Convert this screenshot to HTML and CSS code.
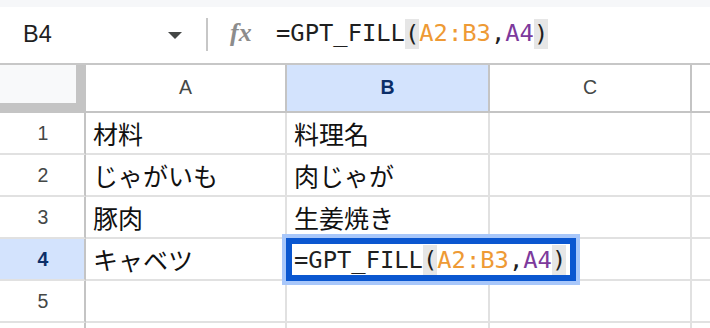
FILE: index.html
```html
<!DOCTYPE html>
<html lang="ja">
<head>
<meta charset="utf-8">
<link rel="stylesheet" href="styles.css">
</head>
<body>
<div class="top-strip"></div>
<div class="fbar">
  <div class="namebox"><span class="name">B4</span><span class="caret"></span></div>
  <div class="divider"></div>
  <div class="fx">fx</div>
  <div class="formula">=GPT_FILL<span class="paren">(</span><span class="r1">A2:B3</span>,<span class="r2">A4</span><span class="paren">)</span></div>
</div>
<div class="grid">
  <div class="corner"><div class="corner-box"></div></div>
  <div class="ch">A</div>
  <div class="ch sel">B</div>
  <div class="ch">C</div>
  <div class="ch last"></div>

  <div class="rh">1</div>
  <div class="cell">材料</div>
  <div class="cell">料理名</div>
  <div class="cell"></div>
  <div class="cell last"></div>

  <div class="rh">2</div>
  <div class="cell">じゃがいも</div>
  <div class="cell">肉じゃが</div>
  <div class="cell"></div>
  <div class="cell last"></div>

  <div class="rh">3</div>
  <div class="cell">豚肉</div>
  <div class="cell">生姜焼き</div>
  <div class="cell"></div>
  <div class="cell last"></div>

  <div class="rh sel">4</div>
  <div class="cell">キャベツ</div>
  <div class="cell"></div>
  <div class="cell"></div>
  <div class="cell last"></div>

  <div class="rh">5</div>
  <div class="cell"></div>
  <div class="cell"></div>
  <div class="cell"></div>
  <div class="cell last"></div>

  <div class="rh stub"></div>
  <div class="cell stub"></div>
  <div class="cell stub"></div>
  <div class="cell stub"></div>
  <div class="cell stub last"></div>

  <div class="editor">
    <div class="editor-inner">=GPT_FILL<span class="paren">(</span><span class="r1">A2:B3</span>,<span class="r2">A4</span><span class="paren">)</span></div>
  </div>
</div>
</body>
</html>
```

FILE: styles.css
```css
* { box-sizing: border-box; }
html, body {
  margin: 0;
  padding: 0;
  background: #ffffff;
  overflow: hidden;
}
body {
  width: 710px;
  height: 328px;
  font-family: "Liberation Sans", Arial, sans-serif;
  color: #1f1f1f;
}
.top-strip {
  height: 7px;
  background: #f6f7f9;
}
.fbar {
  height: 58px;
  display: flex;
  align-items: center;
  border-bottom: 2px solid #c7c7c7;
  padding-bottom: 2px;
}
.namebox {
  width: 206px;
  display: flex;
  align-items: center;
  justify-content: space-between;
  padding-left: 23px;
  padding-right: 24px;
}
.name {
  font-size: 23.5px;
  color: #1f1f1f;
}
.caret {
  width: 0;
  height: 0;
  border-left: 7px solid transparent;
  border-right: 7px solid transparent;
  border-top: 7px solid #444746;
  margin-top: 2px;
}
.divider {
  width: 2px;
  height: 33px;
  background: #c7c7c7;
}
.fx {
  width: 27px;
  margin-left: 22px;
  margin-right: 19px;
  font-family: "Liberation Serif", "Times New Roman", serif;
  font-style: italic;
  font-weight: bold;
  font-size: 26px;
  color: #8c8c8c;
  line-height: 1;
  margin-top: -2px;
}
.formula, .editor-inner {
  font-family: "DejaVu Sans Mono", "Liberation Mono", monospace;
  font-size: 23.8px;
  color: #1f1f1f;
  white-space: nowrap;
}
.paren {
  display: inline-block;
  background: #e6e6e6;
  height: 30px;
  line-height: 30px;
  vertical-align: middle;
}
.r1 { color: #ee9a35; }
.r2 { color: #7d3a9c; }

.grid {
  position: relative;
  display: grid;
  grid-template-columns: 86px 201px 203px 202px 1fr;
  grid-template-rows: 48px repeat(5, 42px) 5px;
}
.corner {
  background: #c4c4c4;
  border-right: 2px solid #c4c4c4;
  border-bottom: 2px solid #c4c4c4;
}
.corner-box {
  width: 76px;
  height: 38px;
  background: #f8f9fa;
}
.ch {
  display: flex;
  align-items: center;
  justify-content: center;
  font-size: 19.5px;
  color: #444746;
  border-right: 2px solid #c4c4c4;
  border-bottom: 2px solid #c4c4c4;
  padding-bottom: 2px;
}
.ch.sel {
  background: #d3e3fd;
  color: #0b2e68;
  font-weight: bold;
}
.rh {
  display: flex;
  align-items: center;
  justify-content: center;
  font-size: 19.5px;
  color: #444746;
  border-right: 2px solid #c4c4c4;
  border-bottom: 2px solid #e1e1e1;
  padding-left: 2px;
}
.rh.sel {
  background: #d3e3fd;
  color: #0b2e68;
  font-weight: bold;
}
.cell {
  display: flex;
  align-items: center;
  padding-left: 7px;
  font-family: "Noto Sans CJK JP", "Liberation Sans", sans-serif;
  font-size: 25px;
  color: #111111;
  border-right: 2px solid #e1e1e1;
  border-bottom: 2px solid #e1e1e1;
  white-space: nowrap;
  overflow: hidden;
}
.stub { border-bottom: none; }
.cell.last, .ch.last { border-right: none; }
.editor {
  position: absolute;
  left: 282px;
  top: 169px;
  width: 298px;
  height: 51px;
  border: 4px solid #a8c7fa;
  background: #ffffff;
}
.editor-inner {
  height: 100%;
  border: 6px solid #0b57d0;
  display: flex;
  align-items: center;
  padding-left: 2px;
}
```
